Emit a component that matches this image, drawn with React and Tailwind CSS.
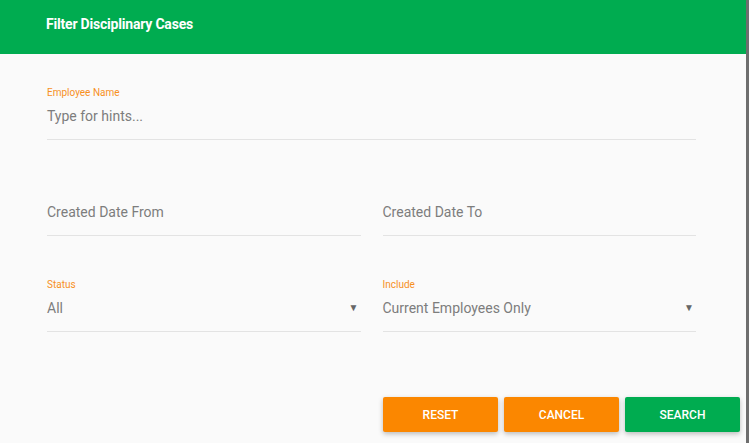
import React from 'react';

function Field({ label, value, placeholder, select, className = '' }) {
  return (
    <div className={`border-b border-[#e3e3e3] pb-[13px] ${className}`}>
      <div className="h-[12px] text-[10px] leading-[12px] text-[#f7901e]">{label}</div>
      <div className="mt-[7px] flex h-[20px] items-center justify-between text-[14px] leading-[20px] text-[#7d7d7d]">
        <span>{value || placeholder}</span>
        {select && <span className="mr-[2px] text-[10px] text-[#666]">▼</span>}
      </div>
    </div>
  );
}

function App() {
  return (
    <div className="flex min-h-[443px] bg-[#6e6e6e] font-['Roboto',sans-serif]">
      <div className="flex w-[746px] flex-col bg-[#fafafa]">
        {/* Header */}
        <div className="flex h-[54px] items-center bg-[#00ac50] pl-[46px] pb-[5px]">
          <h1 className="text-[14px] font-bold tracking-[-0.2px] text-white">Filter Disciplinary Cases</h1>
        </div>

        {/* Form */}
        <div className="pl-[47px] pr-[50px] pt-[33px]">
          <Field label="Employee Name" placeholder="Type for hints..." />

          <div className="mt-[43px] grid grid-cols-2 gap-x-[22px]">
            <Field placeholder="Created Date From" />
            <Field placeholder="Created Date To" />
          </div>

          <div className="mt-[43px] grid grid-cols-2 gap-x-[22px]">
            <Field label="Status" value="All" select />
            <Field label="Include" value="Current Employees Only" select />
          </div>
        </div>

        {/* Actions */}
        <div className="mt-[65px] flex justify-end gap-[6px] pr-[6px]">
          <button className="h-[35px] w-[115px] rounded-[2px] bg-[#fb8700] text-[12px] font-medium text-white shadow-[0_2px_5px_rgba(0,0,0,0.25)]">
            RESET
          </button>
          <button className="h-[35px] w-[115px] rounded-[2px] bg-[#fb8700] text-[12px] font-medium text-white shadow-[0_2px_5px_rgba(0,0,0,0.25)]">
            CANCEL
          </button>
          <button className="h-[35px] w-[115px] rounded-[2px] bg-[#00ac50] text-[12px] font-medium text-white shadow-[0_2px_5px_rgba(0,0,0,0.25)]">
            SEARCH
          </button>
        </div>
      </div>
    </div>
  );
}

export default App;
